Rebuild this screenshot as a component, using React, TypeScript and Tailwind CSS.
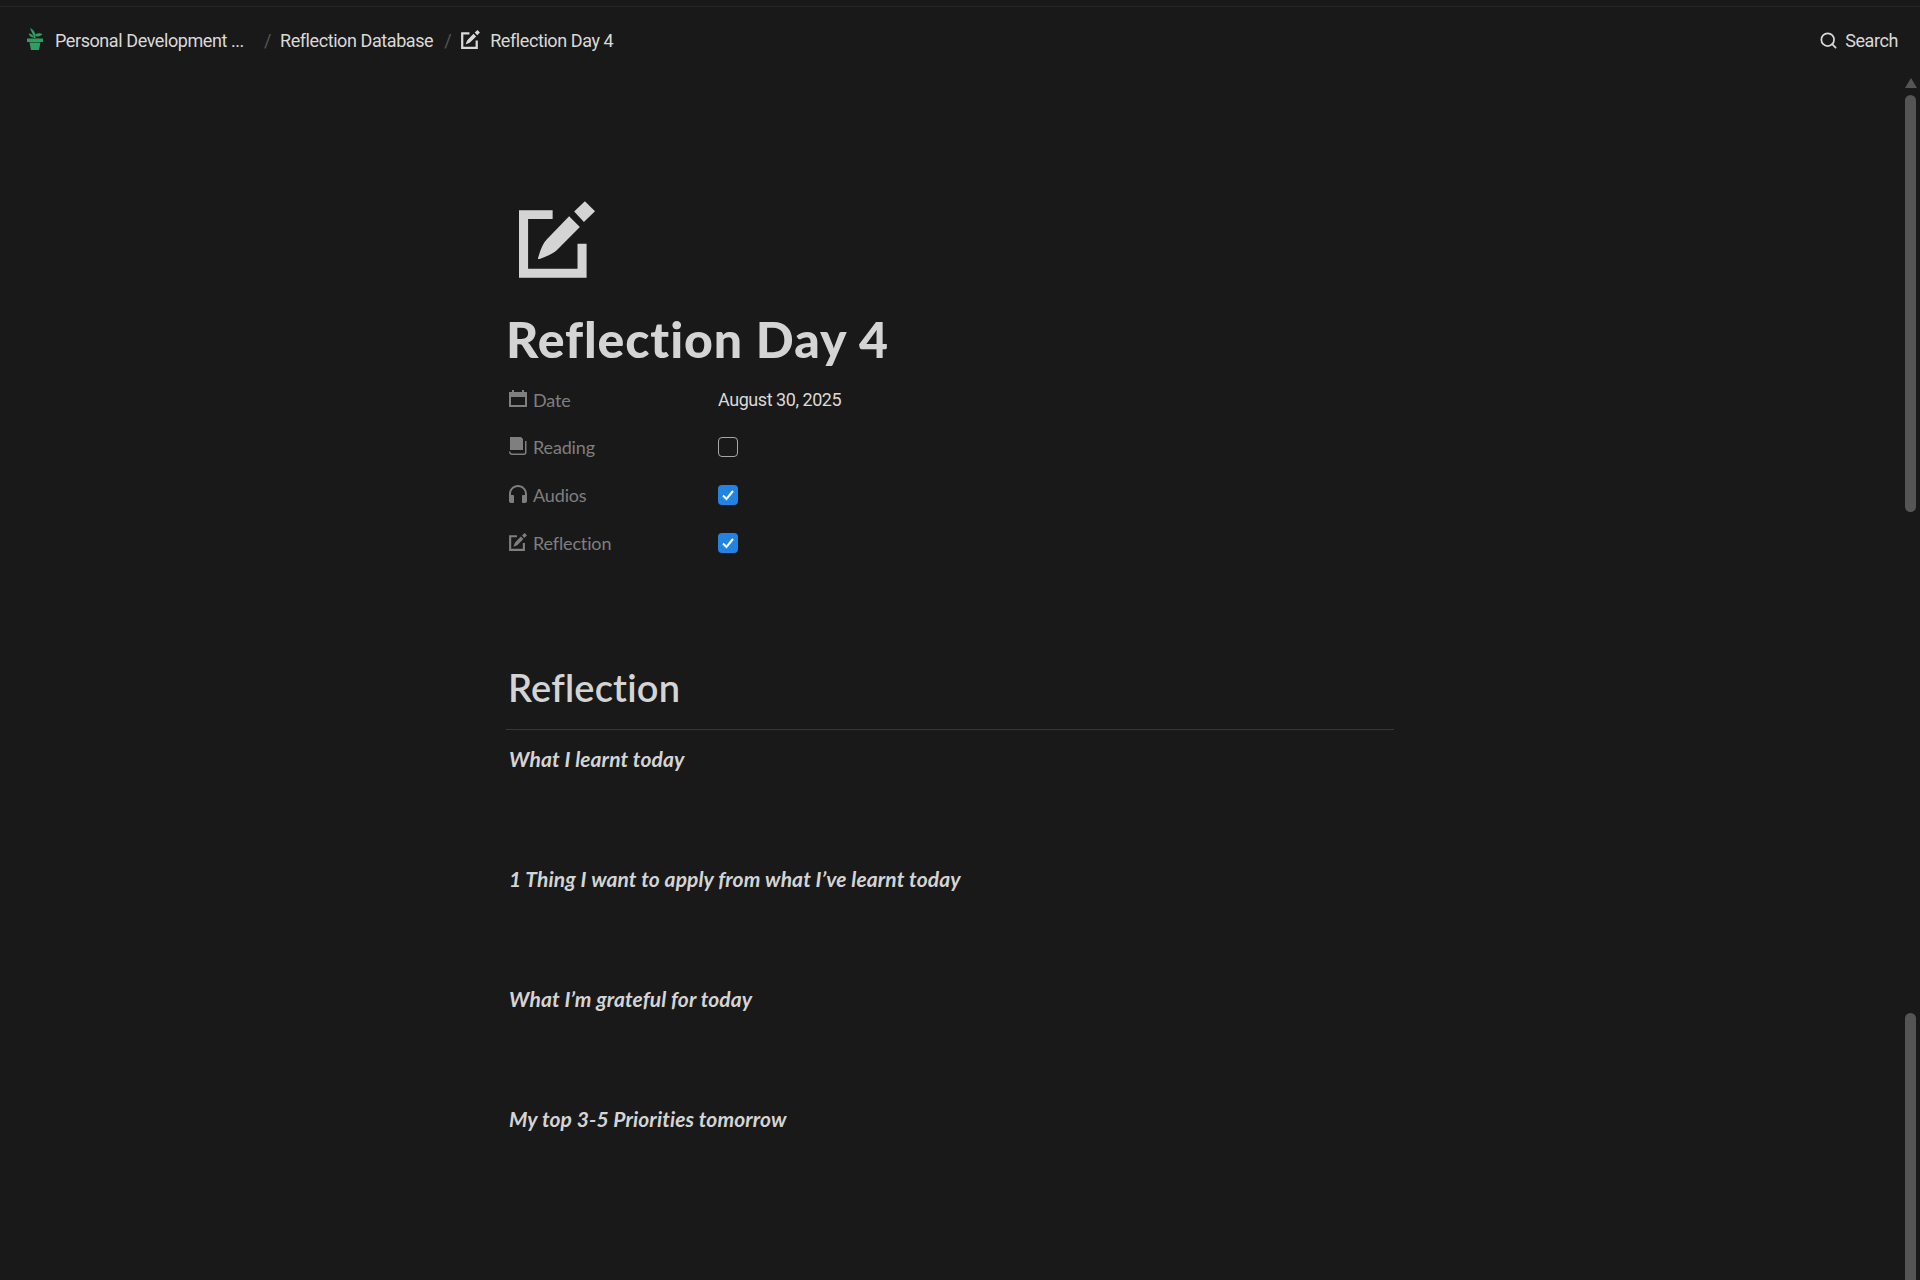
import { Search } from "lucide-react";

function EditIcon({ className }: { className?: string }) {
    return (
        <svg viewBox="87 65 226 228" className={className} fill="currentColor">
            <path d="M87 92H187V118H114V266H261V192H288V293H87Z" />
            <path d="M143 237C150 210 158 190 170 178L236 110L268 142L200 210C188 222 165 230 148 237Z" />
            <path d="M283 65L313 95L280 127L251 96Z" />
        </svg>
    );
}

function PlantIcon() {
    return (
        <svg viewBox="0 0 16 22" className="w-[16px] h-[22px] -mt-[3px]" fill="#2e9e62">
            <path d="M0 10.5H16V14H0Z" />
            <path d="M2.5 14.5H13.5L12 22H4Z" />
            <path d="M3 0C5.5 1 7.5 3 8.5 6.5V10H7C6.5 7 4 3 3 0Z" />
            <path d="M8.5 6.5C10.5 5 13 5 15.5 6C14 8 11 9 8.5 8Z" />
            <path d="M1.5 5.5C4 5.5 6 7 7 9.5C5 10 2.5 8.5 1.5 5.5Z" />
        </svg>
    );
}

function CalendarIcon() {
    return (
        <svg viewBox="0 0 18 18" className="w-[18px] h-[18px]" fill="currentColor">
            <path d="M3 0H5V2H13V0H15V2H18V17H0V2H3V0ZM2 7V15H16V7H2Z" />
        </svg>
    );
}

function BookIcon() {
    return (
        <svg viewBox="0 0 18 18" className="w-[18px] h-[18px]" fill="currentColor">
            <path d="M1 0H12L14 2V13H1V0Z" />
            <path d="M0 11V15C0 16.5 1 18 3 18H15C16.5 18 17.5 17 17.5 15.5V4H16V15C16 16 15.5 16.5 14.5 16.5H3C1.8 16.5 1.5 15.5 1.5 14.5H0V11Z" />
        </svg>
    );
}

function HeadphonesIcon() {
    return (
        <svg viewBox="0 0 18 18" className="w-[18px] h-[18px]" fill="currentColor">
            <path d="M9 0C4 0 0 4 0 9V16C0 17 .8 18 2 18H4C4.6 18 5 17.5 5 17V11C5 10.5 4.6 10 4 10H2V9C2 5 5 2 9 2S16 5 16 9V10H14C13.4 10 13 10.5 13 11V17C13 17.5 13.4 18 14 18H16C17.2 18 18 17 18 16V9C18 4 14 0 9 0Z" />
        </svg>
    );
}

function Checkbox({ checked }: { checked: boolean }) {
    if (!checked) {
        return <div className="w-5 h-5 rounded-[4px] border border-[#a8a8a8]" />;
    }
    return (
        <div className="w-5 h-5 rounded-[4px] bg-[#2383e2] flex items-center justify-center">
            <svg viewBox="0 0 14 14" className="w-[14px] h-[14px]" fill="none" stroke="white" strokeWidth="2">
                <path d="M2 7.5L5.5 11L12 3" />
            </svg>
        </div>
    );
}

function PropRow({ icon, label, children }: { icon: React.ReactNode; label: string; children: React.ReactNode }) {
    return (
        <div className="flex items-center h-[47.6px]">
            <div className="w-[212px] flex items-center gap-[6px] pl-[3px] text-[#7f7f7f]">
                <span className="-mt-[2px]">{icon}</span>
                <span className="text-[18px] mt-[1px] tracking-[-0.15px]">{label}</span>
            </div>
            {children}
        </div>
    );
}

const prompts = [
    "What I learnt today",
    "1 Thing I want to apply from what I’ve learnt today",
    "What I’m grateful for today",
    "My top 3-5 Priorities tomorrow",
];

export default function App() {
    return (
        <div className="relative w-[1920px] h-[1280px] overflow-hidden bg-[#191919] text-[#d4d4d4] font-['Lato',sans-serif] [font-variant-ligatures:none]">
            {/* Top bar */}
            <div className="h-[7px] border-b border-[#262626]" />
            <header className="h-[67px] flex items-center justify-between pl-[27px] pr-[22px] font-['Roboto',sans-serif] text-[18px] tracking-[-0.42px] text-[#d9d9d9]">
                <div className="flex items-center">
                    <PlantIcon />
                    <span className="ml-[12px]">Personal Development ...</span>
                    <span className="ml-[20px] text-[#555555]">/</span>
                    <span className="ml-[9px]">Reflection Database</span>
                    <span className="ml-[11px] text-[#555555]">/</span>
                    <EditIcon className="ml-[10px] w-[19px] h-[19px] -mt-[2px]" />
                    <span className="ml-[10px]">Reflection Day 4</span>
                </div>
                <div className="flex items-center gap-[7px]">
                    <Search size={19} strokeWidth={2.2} />
                    <span>Search</span>
                </div>
            </header>

            {/* Page */}
            <main className="w-[888px] ml-[506px]">
                <div className="pl-[13px] pt-[127px]">
                    <EditIcon className="w-[76px] h-[77px]" />
                </div>
                <h1 className="mt-[30px] h-[62px] text-[50px] leading-[62px] font-black tracking-[0.9px]">Reflection Day 4</h1>
                <div className="mt-[6px]">
                    <PropRow icon={<CalendarIcon />} label="Date">
                        <span className="text-[18px] text-[#d9d9d9] font-['Roboto',sans-serif] tracking-[-0.45px] -mt-[1px]">August 30, 2025</span>
                    </PropRow>
                    <PropRow icon={<BookIcon />} label="Reading"><Checkbox checked={false} /></PropRow>
                    <PropRow icon={<HeadphonesIcon />} label="Audios"><Checkbox checked /></PropRow>
                    <PropRow icon={<EditIcon className="w-[18px] h-[18px]" />} label="Reflection"><Checkbox checked /></PropRow>
                </div>
                <h2 className="mt-[96px] pl-[2px] text-[38px] leading-[50px] font-semibold tracking-[0.2px]">Reflection</h2>
                <div className="mt-[17px] border-t border-[#383838]" />
                <div className="mt-[14px] pl-[3px]">
                    {prompts.map((p) => (
                        <p key={p} className="h-[120px] text-[21px] leading-[30px] italic font-bold tracking-[0.1px]">{p}</p>
                    ))}
                </div>
            </main>

            {/* Scrollbars */}
            <div className="absolute right-[3px] top-[78px] w-0 h-0 border-x-[6.5px] border-x-transparent border-b-[10px] border-b-[#555555]" />
            <div className="absolute right-[4px] top-[95px] w-[11px] h-[417px] rounded-full bg-[#555555]" />
            <div className="absolute right-[4px] top-[1013px] w-[11px] h-[280px] rounded-full bg-[#555555]" />
        </div>
    );
}
